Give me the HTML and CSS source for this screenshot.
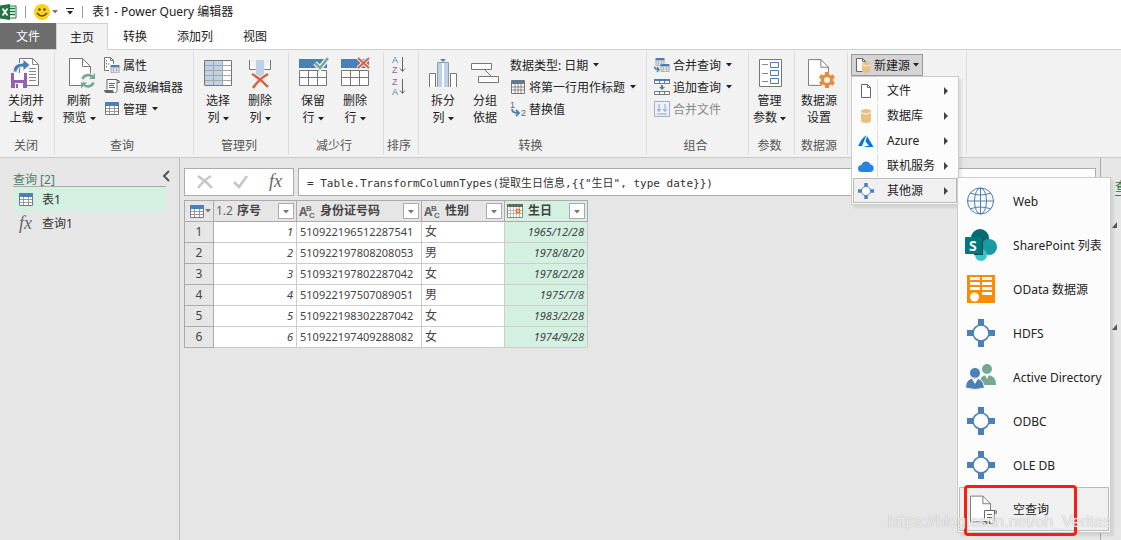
FILE: index.html
```html
<!DOCTYPE html>
<html lang="zh-CN">
  <head>
    <meta charset="UTF-8" />
    <title>表1 - Power Query 编辑器</title>
    <link rel="stylesheet" href="styles.css">
  </head>
  <body>
    <!-- shared icons -->
    <svg class="sprite" aria-hidden="true">
      <symbol id="caret" viewBox="0 0 6 4"><path d="M0 0h6L3 3.5z" fill="currentColor"/></symbol>
      <symbol id="arrow" viewBox="0 0 4 8"><path d="M0 0l4 4-4 4z" fill="#444"/></symbol>
      <symbol id="table" viewBox="0 0 14 13">
        <path d="M.5.5h13v12H.5z" fill="#fff" stroke="#777"/>
        <path d="M0 0h14v4H0z" fill="#4a7fb8"/>
        <path d="M1 6.5h12M1 9.5h12M4.5 4v8M9.5 4v8" stroke="#999"/>
      </symbol>
      <symbol id="node" viewBox="0 0 28 28">
        <path d="M11 0h6v7h-6zM11 21h6v7h-6zM0 11h7v6H0zM21 11h7v6h-7z" fill="#4a7fb8"/>
        <circle cx="14" cy="14" r="8" fill="#fcfcfc" stroke="#4a7fb8" stroke-width="1.6"/>
      </symbol>
      <symbol id="page" viewBox="0 0 22 28">
        <path d="M.5.5h13l8 8v19H.5z" fill="#fff" stroke="#777"/>
        <path d="M13.5.5v8h8" fill="none" stroke="#777"/>
      </symbol>
      <symbol id="page-small" viewBox="0 0 12 14">
        <path d="M1.500.5h6l3 3v10h-9z" fill="#fff" stroke="#666"/>
        <path d="M7.500.5v3h3" fill="none" stroke="#666"/>
      </symbol>
      <symbol id="cylinder" viewBox="0 0 10 14">
        <path d="M0 2.5h10v9Q10 14 5 14T0 11.500z" fill="#e8c080"/>
        <ellipse cx="5" cy="2.500" rx="5" ry="2.500" fill="#e8c080"/>
        <path d="M0 3Q1 5 5 5t5-2" fill="none" stroke="#fff"/>
      </symbol>
    </svg>

    <header class="titlebar">
      <svg width="17" height="16" viewBox="0 0 17 16">
        <path d="M8 2h8v12H8z" fill="#fff" stroke="#217346"/>
        <path d="M10 4.500h5M10 7.500h5M10 10.500h5" stroke="#217346" stroke-width="1.500"/>
        <path d="M0 1.500L10 0v16L0 14.500z" fill="#217346"/>
        <path d="M2.500 4.500l5 7M7.500 4.500l-5 7" stroke="#fff" stroke-width="1.800"/>
      </svg>
      <span class="divider"></span>
      <button class="quick" aria-label="反馈">
        <svg width="16" height="16" viewBox="0 0 16 16">
          <circle cx="8" cy="8" r="8" fill="#fcd116"/>
          <circle cx="5.500" cy="5.500" r="1.200" fill="#444"/><circle cx="10.500" cy="5.500" r="1.200" fill="#444"/>
          <path d="M3 9q5 6 10 0" fill="none" stroke="#444" stroke-width="1.300"/>
        </svg>
        <svg class="caret gray"><use href="#caret"/></svg>
      </button>
      <button class="quick" aria-label="自定义快速访问工具栏">
        <svg width="8" height="7" viewBox="0 0 8 7"><path d="M0 .5h8" stroke="#222"/><path d="M1 3h6L4 6.500z" fill="#222"/></svg>
      </button>
      <span class="divider"></span>
      <h1>表1 - Power Query 编辑器</h1>
    </header>

    <nav class="tabs">
      <button class="tab file">文件</button>
      <button class="tab active">主页</button>
      <button class="tab">转换</button>
      <button class="tab">添加列</button>
      <button class="tab">视图</button>
    </nav>

    <section class="ribbon">
      <div class="group">
        <div class="tools">
          <button class="big">
            <svg width="32" height="32" viewBox="0 0 32 32">
              <path d="M9.500 1.500h13l6 6v21h-19z" fill="#fff" stroke="#777"/>
              <path d="M22.500 1.500v6h6M19 11.500h7M19 14.500h7M19 17.500h7M19 20.500h7M19 23.500h7" fill="none" stroke="#888"/>
              <path d="M3 15q0-9 10-9V2l7 6-7 6v-4q-6 0-6 5z" fill="#4a7fb8" stroke="#f2f2f2"/>
              <path d="M1 16h16v15H1z" fill="#9560ae"/><path d="M4 16h10v7H4zM5 26h8v5H5z" fill="#fff"/><path d="M6 27h2v4H6z" fill="#9560ae"/>
            </svg>
            <span>关闭并</span>
            <span>上载 <svg class="caret"><use href="#caret"/></svg></span>
          </button>
        </div>
        <p class="group-name">关闭</p>
      </div>

      <div class="group">
        <div class="tools">
          <button class="big">
            <svg width="32" height="32" viewBox="0 0 32 32">
              <use href="#page" x="6" y="1" width="22" height="28"/>
              <circle cx="25" cy="24" r="8" fill="#f2f2f2"/>
              <path d="M19.500 22a6 6 0 0 1 10-2M30.500 25.500a6 6 0 0 1-10 2" fill="none" stroke="#74a892" stroke-width="2.500"/>
              <path d="M32 16v6h-6zM18 31.500v-6h6z" fill="#74a892"/>
            </svg>
            <span>刷新</span>
            <span>预览 <svg class="caret"><use href="#caret"/></svg></span>
          </button>
          <div class="stack">
            <button class="small">
              <svg width="16" height="16" viewBox="0 0 16 16">
                <path d="M5 13.500H.5V.5h6l3 3V7" fill="#fff" stroke="#777"/>
                <path d="M2.500 3v1.500M2.500 6v1.500M2.500 9v1.500M4 7h1.500M6.500.5v3h3" fill="none" stroke="#777"/>
                <use href="#table" x="6" y="8" width="10" height="8"/>
              </svg>属性</button>
            <button class="small">
              <svg width="16" height="16" viewBox="0 0 16 16">
                <path d="M3 10.500V.5h10v10c0 3-1 3-2 3" fill="#fff" stroke="#666"/>
                <path d="M13 1.500q2.500-1 2.500 2H13M5 4.500h6M5 6.500h5M5 8.500h6" fill="none" stroke="#666"/>
                <path d="M0 11h9q0 2.500 2 3H2q-2-1-2-3z" fill="#666"/>
              </svg>高级编辑器</button>
            <button class="small"><svg width="16" height="14"><use href="#table" x="1" width="14" height="13"/></svg>管理 <svg class="caret"><use href="#caret"/></svg></button>
          </div>
        </div>
        <p class="group-name">查询</p>
      </div>

      <div class="group">
        <div class="tools">
          <button class="big">
            <svg width="32" height="32" viewBox="0 0 32 32">
              <path d="M2.500 3.500h27v25h-27z" fill="#fff" stroke="#777"/>
              <path d="M3 4h18v24H3z" fill="#bdd2e8"/>
              <path d="M3 8.500h26M3 13.500h26M3 18.500h26M3 23.500h26M11.500 4v24M20.500 4v24" stroke="#a5a5a5"/>
            </svg>
            <span>选择</span>
            <span>列 <svg class="caret"><use href="#caret"/></svg></span>
          </button>
          <button class="big">
            <svg width="32" height="32" viewBox="0 0 32 32">
              <path d="M5.500 3v9.500h6M26.500 3v9.500h-6" fill="#fff" stroke="#777"/>
              <path d="M12 3h8v14l-4 3-4-3z" fill="#bdd2e8"/>
              <path d="M8 17q9 5 16 13M24 17q-9 5-15 14" fill="none" stroke="#d8603e" stroke-width="2.500"/>
            </svg>
            <span>删除</span>
            <span>列 <svg class="caret"><use href="#caret"/></svg></span>
          </button>
        </div>
        <p class="group-name">管理列</p>
      </div>

      <div class="group">
        <div class="tools">
          <button class="big">
            <svg width="32" height="32" viewBox="0 0 32 32">
              <path d="M2 2h28v9H2z" fill="#4a7fb8"/>
              <path d="M2.500 13.500h27v15h-27zM2 20.500h28M11.500 13v16M20.500 13v16" fill="#fff" stroke="#777"/>
              <path d="M18 6l5 5 8-10" fill="none" stroke="#f2f2f2" stroke-width="5"/>
              <path d="M18 6l5 5 8-10" fill="none" stroke="#74a892" stroke-width="2.500"/>
            </svg>
            <span>保留</span>
            <span>行 <svg class="caret"><use href="#caret"/></svg></span>
          </button>
          <button class="big">
            <svg width="32" height="32" viewBox="0 0 32 32">
              <path d="M2 2h28v9H2z" fill="#4a7fb8"/>
              <path d="M2.500 13.500h27v15h-27zM2 20.500h28M11.500 13v16M20.500 13v16" fill="#fff" stroke="#777"/>
              <path d="M19 1l11 10M30 1L19 11" stroke="#f2f2f2" stroke-width="4"/>
              <path d="M19 1l11 10M30 1L19 11" stroke="#d8603e" stroke-width="2"/>
            </svg>
            <span>删除</span>
            <span>行 <svg class="caret"><use href="#caret"/></svg></span>
          </button>
        </div>
        <p class="group-name">减少行</p>
      </div>

      <div class="group">
        <div class="tools">
          <div class="stack">
            <button class="sort" aria-label="升序排序">
              <svg width="16" height="20" viewBox="0 0 16 20">
                <text x="1" y="8" class="sort-a">A</text><text x="1" y="18" class="sort-z">Z</text>
                <path d="M11.500 2v14M9 13.500l2.500 3 2.500-3" fill="none" stroke="#666"/>
              </svg>
            </button>
            <button class="sort" aria-label="降序排序">
              <svg width="16" height="20" viewBox="0 0 16 20">
                <text x="1" y="8" class="sort-z">Z</text><text x="1" y="18" class="sort-a">A</text>
                <path d="M11.500 2v14M9 13.500l2.500 3 2.500-3" fill="none" stroke="#666"/>
              </svg>
            </button>
          </div>
        </div>
        <p class="group-name">排序</p>
      </div>

      <div class="group">
        <div class="tools">
          <button class="big">
            <svg width="32" height="32" viewBox="0 0 32 32">
              <path d="M2.500 30V16.500h6V30M29.500 30V16.500h-6V30" fill="#fff" stroke="#777"/>
              <path d="M10.500 30V5.500h11V30" fill="#fff" stroke="#999"/>
              <path d="M11 6h4v24h-4zM17 6h4v24h-4z" fill="#bdd2e8"/>
              <path d="M13 2h6l-3 3z" fill="#4a7fb8"/>
            </svg>
            <span>拆分</span>
            <span>列 <svg class="caret"><use href="#caret"/></svg></span>
          </button>
          <button class="big">
            <svg width="32" height="32" viewBox="0 0 32 32">
              <path d="M2.500 6.500h20v6h-20zM9.500 19.500h20v6h-20z" fill="#fff" stroke="#777"/>
              <path d="M16 13l6 6" stroke="#777"/>
            </svg>
            <span>分组</span>
            <span>依据</span>
          </button>
          <div class="stack">
            <button class="small">数据类型: 日期 <svg class="caret"><use href="#caret"/></svg></button>
            <button class="small">
              <svg width="16" height="14" viewBox="0 0 16 14">
                <path d="M1.500.5h13v13h-13z" fill="#fff" stroke="#777"/><path d="M2 1h12v3H2z" fill="#4a7fb8"/>
                <path d="M2 7h12M2 10h12M5 4v9M8 4v9M11 4v9" stroke="#888"/>
              </svg>将第一行用作标题 <svg class="caret"><use href="#caret"/></svg></button>
            <button class="small">
              <svg width="16" height="16" viewBox="0 0 16 16">
                <text x="0" y="7" class="digit">1</text><text x="11" y="15" class="digit">2</text>
                <path d="M2 8q0 4 6 4M6 9l3 3-3 3" fill="none" stroke="#4a7fb8" stroke-width="1.800"/>
              </svg>替换值</button>
          </div>
        </div>
        <p class="group-name">转换</p>
      </div>

      <div class="group">
        <div class="tools">
          <div class="stack wide">
            <button class="small">
              <svg width="16" height="16" viewBox="0 0 16 16">
                <use href="#table" x="1" y="1" width="10" height="8"/><use href="#table" x="6" y="7" width="10" height="8"/>
                <path d="M.5 9.500q0 3 4 3M3 10l2 2.500L3 15" fill="none" stroke="#4a7fb8" stroke-width="1.500"/>
              </svg>合并查询 <svg class="caret"><use href="#caret"/></svg></button>
            <button class="small">
              <svg width="16" height="16" viewBox="0 0 16 16">
                <path d="M.5 1.500h15v3H.5zM.5 12.500h15v3H.5zM5.500 2v3M10.500 2v3M5.500 12v3M10.500 12v3" fill="#fff" stroke="#777"/>
                <path d="M0 0h16v2H0zM7 6h2v2H7zM5 8h6L8 11z" fill="#4a7fb8"/>
              </svg>追加查询 <svg class="caret"><use href="#caret"/></svg></button>
            <button class="small" disabled>
              <svg width="16" height="16" viewBox="0 0 16 16">
                <path d="M.5.5h15v15H.5z" fill="#edf1f9" stroke="#9db0d0"/>
                <path d="M5 3v7M3 8l2 2.500L7 8M11 3v7M9 8l2 2.500L13 8M3 13h10" fill="none" stroke="#8ca3c8"/>
              </svg>合并文件</button>
          </div>
        </div>
        <p class="group-name">组合</p>
      </div>

      <div class="group">
        <div class="tools">
          <button class="big narrow">
            <svg width="32" height="32" viewBox="0 0 32 32">
              <path d="M5.500 2.500h22v27h-22z" fill="#fff" stroke="#777"/>
              <path d="M8 7.500h6M8 16.500h6M8 24.500h6" stroke="#888"/>
              <path d="M16.500 5.500h8v5h-8zM16.500 13.500h8v5h-8zM16.500 21.500h8v5h-8z" fill="#fff" stroke="#4a7fb8"/>
            </svg>
            <span>管理</span>
            <span>参数 <svg class="caret"><use href="#caret"/></svg></span>
          </button>
        </div>
        <p class="group-name">参数</p>
      </div>

      <div class="group">
        <div class="tools">
          <button class="big">
            <svg width="32" height="32" viewBox="0 0 32 32">
              <use href="#page" x="5" y="2" width="21" height="27"/>
              <circle cx="24" cy="23" r="8" fill="#f2f2f2"/>
              <path d="M24 15v16M17 19l14 8M31 19l-14 8" stroke="#e88c3c" stroke-width="4"/>
              <circle cx="24" cy="23" r="4.500" fill="#f2f2f2" stroke="#e88c3c" stroke-width="3"/>
            </svg>
            <span>数据源</span>
            <span>设置</span>
          </button>
        </div>
        <p class="group-name">数据源</p>
      </div>

      <div class="group last">
        <div class="new-source">
          <button class="new-button" aria-expanded="true">
            <svg width="16" height="16" viewBox="0 0 16 16">
              <use href="#page-small" y="1" width="12" height="14"/>
              <use href="#cylinder" x="7" y="5" width="8" height="11"/>
            </svg>新建源 <svg class="caret"><use href="#caret"/></svg></button>

          <ul class="menu">
            <li><button><svg class="icon" width="16" height="16"><use href="#page-small" x="2" y="1" width="12" height="14"/></svg>文件<svg class="arrow"><use href="#arrow"/></svg></button></li>
            <li><button><svg class="icon" width="16" height="16"><use href="#cylinder" x="3" y="1" width="10" height="14"/></svg>数据库<svg class="arrow"><use href="#arrow"/></svg></button></li>
            <li><button><svg class="icon" width="16" height="16" viewBox="0 0 16 16"><path d="M8.500 2L4 6 0 13h4zM9 3l6.500 11H5l6-1.500-3.500-4z" fill="#0078d4"/></svg>Azure<svg class="arrow"><use href="#arrow"/></svg></button></li>
            <li><button><svg class="icon" width="16" height="16" viewBox="0 0 16 16"><path d="M3.500 14a3.500 3.500 0 0 1 0-7 4.800 4.800 0 0 1 9-.5 3.800 3.800 0 0 1 0 7.500z" fill="#2a83dc"/></svg>联机服务<svg class="arrow"><use href="#arrow"/></svg></button></li>
            <li>
              <button class="hover"><svg class="icon" width="16" height="16"><use href="#node" width="16" height="16"/></svg>其他源<svg class="arrow"><use href="#arrow"/></svg></button>
              <ul class="submenu">
                <li><button>
                  <svg class="icon" width="32" height="32" viewBox="0 0 32 32" fill="none" stroke="#4a7fb8">
                    <circle cx="15.500" cy="16" r="13"/><ellipse cx="15.500" cy="16" rx="6" ry="13"/>
                    <path d="M2 16h27M15.500 3v26M5 8q10.500 4 21 0M5 24q10.500-4 21 0"/>
                  </svg>Web</button></li>
                <li><button>
                  <svg class="icon" width="32" height="32" viewBox="0 0 32 32">
                    <circle cx="15" cy="9" r="9" fill="#036c70"/><circle cx="24" cy="18" r="8" fill="#1a9ba1"/><circle cx="16" cy="26" r="6" fill="#37c6d0"/>
                    <path d="M7 8h11v18H9z" fill="#024b4e"/><rect y="8" width="17" height="17" rx="1" fill="#03787c"/>
                    <text x="4" y="22" class="sp-letter">S</text>
                  </svg>SharePoint 列表</button></li>
                <li><button>
                  <svg class="icon" width="32" height="32" viewBox="0 0 32 32">
                    <path d="M2 2h28v28H2z" fill="#ff8c00"/>
                    <path d="M5 4h10v3H5zM17 4h10v3H17zM5 9h10v3H5zM17 9h10v3H17zM5 14h10v3H5zM17 14h10v3H17zM17 19h10v3H17z" fill="#fff"/>
                    <circle cx="9.500" cy="24" r="4.500" fill="#fff"/>
                  </svg>OData 数据源</button></li>
                <li><button><svg class="icon" width="32" height="32"><use href="#node" x="2" y="2" width="28" height="28"/></svg>HDFS</button></li>
                <li><button>
                  <svg class="icon" width="32" height="32" viewBox="0 0 32 32">
                    <circle cx="22" cy="8" r="5" fill="#74a892"/><path d="M15 24q-1-10 7-10 9 0 9 10z" fill="#74a892"/><path d="M20 14h4l-2 4z" fill="#fcfcfc"/>
                    <circle cx="10" cy="12" r="5.500" fill="#4a7fb8" stroke="#fcfcfc"/>
                    <path d="M.5 27q0-10 9-10t10 10q-9 3-19 0z" fill="#4a7fb8" stroke="#fcfcfc"/><path d="M7 18h6l-3 5z" fill="#fcfcfc"/>
                  </svg>Active Directory</button></li>
                <li><button><svg class="icon" width="32" height="32"><use href="#node" x="2" y="2" width="28" height="28"/></svg>ODBC</button></li>
                <li><button><svg class="icon" width="32" height="32"><use href="#node" x="2" y="2" width="28" height="28"/></svg>OLE DB</button></li>
                <li><button class="hover">
                  <svg class="icon" width="32" height="32" viewBox="0 0 32 32">
                    <use href="#page" x="5" y="2" width="21" height="28"/>
                    <path d="M19.500 27V17.500h10V28q-1 3-3 2.500" fill="#fff" stroke="#666"/>
                    <path d="M29 18h3v2h-2M22 21.500h5M22 24.500h5" fill="none" stroke="#666"/><path d="M16 28h9l1 3h-8q-2-1-2-3z" fill="#666"/>
                  </svg>空查询</button><span class="highlight"></span></li>
              </ul>
            </li>
          </ul>
        </div>
      </div>
    </section>

    <main class="workspace">
      <aside class="queries">
        <div class="queries-head">
          <h2>查询 [2]</h2>
          <button class="collapse" aria-label="折叠"><svg width="8" height="12" viewBox="0 0 8 12"><path d="M7 1L2 6l5 5" fill="none" stroke="#555" stroke-width="2"/></svg></button>
        </div>
        <ul class="query-list">
          <li><a href="#" class="selected"><svg width="14" height="13"><use href="#table"/></svg>表1</a></li>
          <li><a href="#"><i class="fx">fx</i>查询1</a></li>
        </ul>
      </aside>

      <section class="content">
        <div class="formula">
          <div class="formula-actions">
            <button aria-label="取消"><svg width="16" height="16" viewBox="0 0 16 16"><path d="M1 2q8 5 14 12M14 2Q7 6 1 14" fill="none" stroke="#c6c6c6" stroke-width="2.500"/></svg></button>
            <button aria-label="确认"><svg width="16" height="16" viewBox="0 0 16 16"><path d="M1 8l5 5L14 2" fill="none" stroke="#c6c6c6" stroke-width="2.500"/></svg></button>
            <button aria-label="插入步骤"><i class="fx">fx</i></button>
          </div>
          <input class="formula-input" type="text" aria-label="公式" value='= Table.TransformColumnTypes(提取生日信息,{{"生日", type date}})'>
        </div>

        <table class="data">
          <thead>
            <tr>
              <th class="index"><div class="head"><svg width="14" height="13"><use href="#table"/></svg><svg class="caret gray"><use href="#caret"/></svg></div></th>
              <th class="col"><div class="head"><span class="type">1.2</span>序号<button aria-label="筛选序号"><svg class="caret gray"><use href="#caret"/></svg></button></div></th>
              <th class="col-id"><div class="head">
                <svg width="17" height="16" viewBox="0 0 17 16"><text x="0" y="13" class="abc-big">A</text><text x="7" y="8" class="abc-small">B</text><text x="10" y="15" class="abc-small">C</text></svg>身份证号码<button aria-label="筛选身份证号码"><svg class="caret gray"><use href="#caret"/></svg></button></div></th>
              <th class="col"><div class="head">
                <svg width="17" height="16" viewBox="0 0 17 16"><text x="0" y="13" class="abc-big">A</text><text x="7" y="8" class="abc-small">B</text><text x="10" y="15" class="abc-small">C</text></svg>性别<button aria-label="筛选性别"><svg class="caret gray"><use href="#caret"/></svg></button></div></th>
              <th class="col picked"><div class="head">
                <svg width="17" height="16" viewBox="0 0 17 16">
                  <path d="M.5 1.500h15v13H.5z" fill="#fff" stroke="#888"/><path d="M0 1h16v3H0z" fill="#666"/>
                  <path d="M1 7.500h14M1 10.500h14M3.500 4v10M6.500 4v10M9.500 4v10M12.500 4v10" stroke="#bbb"/>
                  <path d="M9.500 6.500h3v3h-3z" fill="#fff" stroke="#e07820" stroke-width="1.500"/>
                </svg>生日<button aria-label="筛选生日"><svg class="caret gray"><use href="#caret"/></svg></button></div></th>
            </tr>
          </thead>
          <tbody>
            <tr><th>1</th><td class="num">1</td><td>510922196512287541</td><td class="sex">女</td><td class="num picked">1965/12/28</td></tr>
            <tr><th>2</th><td class="num">2</td><td>510922197808208053</td><td class="sex">男</td><td class="num picked">1978/8/20</td></tr>
            <tr><th>3</th><td class="num">3</td><td>510932197802287042</td><td class="sex">女</td><td class="num picked">1978/2/28</td></tr>
            <tr><th>4</th><td class="num">4</td><td>510922197507089051</td><td class="sex">男</td><td class="num picked">1975/7/8</td></tr>
            <tr><th>5</th><td class="num">5</td><td>510922198302287042</td><td class="sex">女</td><td class="num picked">1983/2/28</td></tr>
            <tr><th>6</th><td class="num">6</td><td>510922197409288082</td><td class="sex">女</td><td class="num picked">1974/9/28</td></tr>
          </tbody>
        </table>
      </section>

      <aside class="settings">
        <h2>查询设置</h2>
        <svg class="corner" width="5" height="6" viewBox="0 0 5 6"><path d="M5 0v6H0z" fill="#555"/></svg>
        <svg class="corner" width="5" height="6" viewBox="0 0 5 6"><path d="M5 0v6H0z" fill="#555"/></svg>
      </aside>
    </main>

    <p class="watermark">https://blog.csdn.net/oh_Veritas</p>
  </body>
</html>
```

FILE: styles.css
```css
* {
  box-sizing: border-box;
}

body {
  position: relative;
  display: flex;
  flex-direction: column;
  min-height: 100vh;
  margin: 0;
  overflow: hidden;
  background-color: #e6e6e6;
  color: #222;
  font-family: "Noto Sans", "Noto Sans CJK SC", sans-serif;
  font-size: 12px;
  line-height: 17px;
}

h1, h2, p, ul {
  margin: 0;
  padding: 0;
  font-size: 12px;
  font-weight: normal;
}

ul {
  list-style: none;
}

button {
  padding: 0;
  border: none;
  background: none;
  color: inherit;
  font: inherit;
  white-space: nowrap;
}

svg {
  flex: none;
}

.sprite {
  position: absolute;
  width: 0;
  height: 0;
}

.caret {
  width: 6px;
  height: 4px;
  vertical-align: middle;
}

.gray {
  color: #777;
}

.arrow {
  width: 4px;
  height: 8px;
  margin-left: auto;
}

.fx {
  color: #666;
  font-family: "Liberation Serif", serif;
  font-size: 18px;
}

.abc-big {
  fill: #666;
  font-size: 12px;
  font-weight: bold;
}

.abc-small {
  fill: #666;
  font-family: "Liberation Sans", sans-serif;
  font-size: 8px;
  font-weight: bold;
}

.sort-a {
  fill: #4a7fb8;
  font-family: "Liberation Sans", sans-serif;
  font-size: 9px;
}

.sort-z {
  fill: #9560ae;
  font-family: "Liberation Sans", sans-serif;
  font-size: 9px;
}

.digit {
  fill: #666;
  font-family: "Liberation Sans", sans-serif;
  font-size: 9px;
}

.sp-letter {
  fill: #fff;
  font-size: 14px;
  font-weight: bold;
}

/* title bar and tabs */
.titlebar {
  display: flex;
  align-items: center;
  height: 23px;
  gap: 8px;
  background-color: #fff;
}

.titlebar h1 {
  padding-left: 1px;
}

.divider {
  width: 1px;
  height: 12px;
  background-color: #999;
}

.quick {
  display: flex;
  align-items: center;
  gap: 2px;
}

.tabs {
  display: flex;
  height: 27px;
  background-color: #fff;
  border-bottom: 1px solid #d0d0d0;
}

.tab {
  padding: 0 15px;
}

.tab.file {
  padding: 0 16px;
  background-color: #6d6d6d;
  color: #fff;
}

.tab.active {
  margin-bottom: -1px;
  padding: 0 13px;
  border: 1px solid #d0d0d0;
  border-bottom: none;
  background-color: #f2f2f2;
}

/* ribbon */
.ribbon {
  display: flex;
  height: 108px;
  padding: 2px 0 3px 2px;
  border-bottom: 1px solid #c8c8c8;
  background-color: #f2f2f2;
}

.group {
  display: flex;
  flex-direction: column;
  justify-content: space-between;
  padding: 2px 7px 0 3px;
  border-right: 1px solid #dcdcdc;
}

.group.last {
  width: 119px;
}

.tools {
  display: flex;
}

.big {
  display: flex;
  flex-direction: column;
  align-items: center;
  width: 42px;
}

.big > svg {
  margin: 3px 0;
}

.narrow {
  width: 35px;
}

.stack {
  display: flex;
  flex-direction: column;
}

.stack.wide {
  width: 91px;
}

.small {
  display: flex;
  align-items: center;
  height: 22px;
  gap: 3px;
  padding: 0 3px 0 4px;
}

.small .caret {
  margin-left: 2px;
}

.small:disabled {
  color: #888;
}

.sort {
  width: 24px;
  height: 22px;
}

.sort svg {
  display: block;
  margin: 0 auto;
}

.group-name {
  color: #555;
  text-align: center;
}

/* data source menu */
.new-source {
  position: relative;
  align-self: flex-start;
}

.new-button {
  display: flex;
  align-items: center;
  height: 22px;
  gap: 3px;
  padding: 0 3px;
  border: 1px solid #999;
  background-color: #d4d4d4;
}

.menu,
.submenu {
  position: absolute;
  z-index: 1;
  padding: 1px;
  border: 1px solid #ccc;
  background-color: #fcfcfc;
  box-shadow: 3px 3px 2px rgba(0, 0, 0, 0.08);
}

.menu {
  top: 100%;
  left: 0;
  width: 108px;
}

.menu li {
  position: relative;
}

.menu button {
  display: flex;
  align-items: center;
  width: 100%;
  height: 25px;
  padding: 0 8px 0 4px;
  border: 1px solid transparent;
}

.menu .icon {
  margin-right: 13px;
}

.menu > li > button {
  background-image: linear-gradient(#ddd, #ddd);
  background-position: 23px 0;
  background-repeat: no-repeat;
  background-size: 1px 100%;
}

.menu .hover,
.menu > li > .hover {
  border-color: #bbb;
  background-color: #f0f0f0;
  background-image: none;
}

.submenu {
  top: 0;
  left: 100%;
  width: 154px;
  margin-top: -1px;
}

.submenu button {
  height: 44px;
  padding: 0 4px 0 5px;
}

.submenu .icon {
  margin-right: 16px;
}

.highlight {
  position: absolute;
  top: -2px;
  left: 5px;
  width: 113px;
  height: 51px;
  border: 3px solid #fb1d12;
  border-radius: 4px;
}

/* query list */
.workspace {
  display: flex;
  flex: 1;
}

.queries {
  flex: 0 0 180px;
  padding: 10px 13px 0;
  border-right: 1px solid #bbb;
}

.queries-head {
  display: flex;
  align-items: center;
  justify-content: space-between;
  height: 19px;
  border-bottom: 1px solid #aaa;
  color: #4c7c64;
}

.queries-head h2 {
  padding-top: 5px;
}

.queries-head .collapse {
  margin-right: -4px;
}

.query-list a {
  display: flex;
  align-items: center;
  height: 24px;
  gap: 9px;
  padding-left: 6px;
  color: #333;
  text-decoration: none;
}

.query-list .fx {
  width: 14px;
}

.query-list .selected {
  background-color: #d3f0e0;
}

/* formula bar and preview */
.content {
  flex: 1;
  padding: 10px 4px;
}

.formula {
  display: flex;
  height: 28px;
  gap: 4px;
  margin-bottom: 4px;
}

.formula-actions {
  display: flex;
  align-items: center;
  justify-content: space-between;
  width: 110px;
  padding: 0 11px 0 12px;
  border: 1px solid #ababab;
  background-color: #fff;
}

.formula-actions svg {
  display: block;
}

.formula-input {
  flex: 1;
  padding: 0 8px;
  border: 1px solid #ababab;
  background-color: #fff;
  color: #333;
  font-family: "DejaVu Sans Mono", "Noto Sans CJK SC", monospace;
  font-size: 11px;
}

.data {
  table-layout: fixed;
  width: 404px;
  border-collapse: collapse;
  color: #444;
  font-size: 11px;
}

.data th,
.data td {
  height: 21px;
  padding: 0 3px;
  border: 1px solid #ccc;
  background-color: #fff;
  line-height: 16px;
}

.data th {
  border-color: #aaa;
  background-color: #e6e6e6;
  font-size: 12px;
  font-weight: normal;
}

.data thead th {
  padding: 0 2px;
  font-weight: bold;
}

.data .index {
  width: 29px;
  padding-left: 5px;
}

.data .col {
  width: 83px;
}

.data .col-id {
  width: 125px;
}

.data .num {
  font-style: italic;
  text-align: right;
}

.data .sex {
  font-size: 12px;
}

.data .picked {
  background-color: #d3f0e0;
}

.head {
  display: flex;
  align-items: center;
  gap: 4px;
}

.index .head {
  gap: 1px;
}

.type {
  color: #666;
  font-weight: normal;
}

.head button {
  width: 16px;
  height: 16px;
  margin-left: auto;
  border: 1px solid #aaa;
  background-color: #fff;
  line-height: 12px;
}

/* settings pane, cut off by the window edge */
.settings {
  flex: 0 0 21px;
  padding: 20px 0 0 14px;
  border-left: 1px solid #aaa;
  overflow: hidden;
  white-space: nowrap;
}

.settings h2 {
  width: 80px;
  border-bottom: 1px solid #4c7c64;
  color: #217346;
}

.corner {
  display: block;
  margin: 26px 0 96px -3px;
}

.corner + .corner {
  margin-top: 0;
}

.watermark {
  position: absolute;
  z-index: 2;
  right: 10px;
  bottom: 10px;
  color: rgba(255, 255, 255, 0.8);
  font-family: "Liberation Sans", sans-serif;
  font-size: 16px;
  text-shadow: 0 0 1px #999;
}
```
